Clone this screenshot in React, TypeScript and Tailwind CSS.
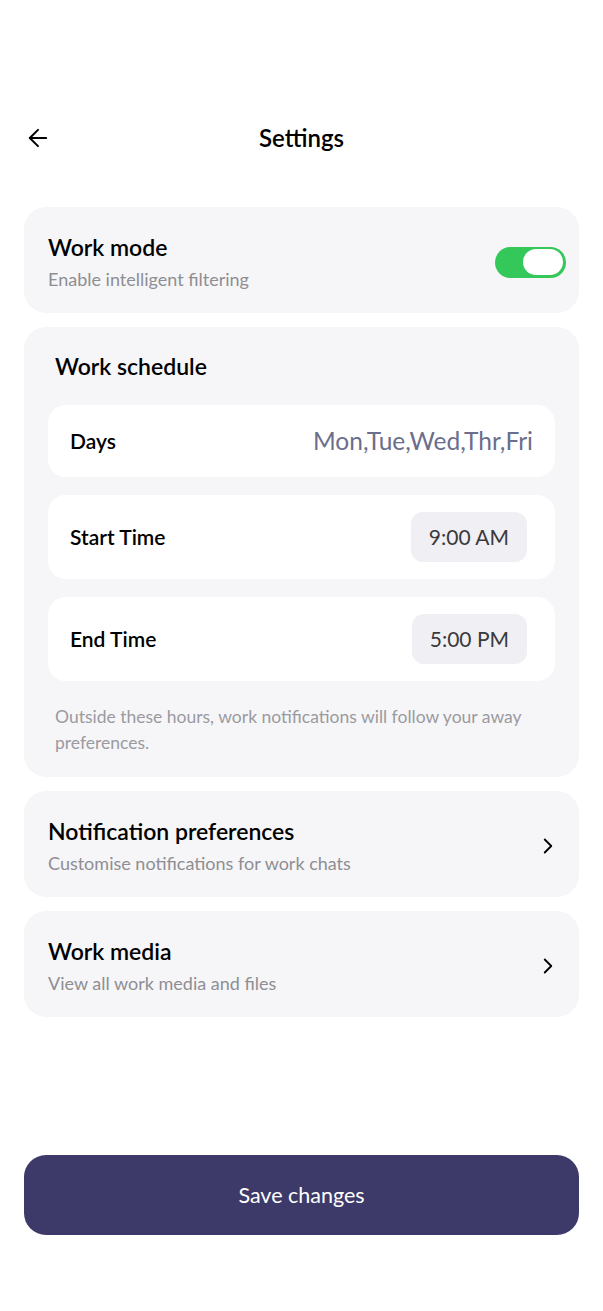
import { ArrowLeft, ChevronRight } from "lucide-react";

const font = { fontFamily: '"Lato", "Noto Sans", sans-serif' };

function Toggle() {
  return (
    <div className="flex h-[31px] w-[71px] items-center justify-end rounded-full bg-[#34c759] px-[3px]">
      <div className="h-[26px] w-[40px] rounded-full bg-white" />
    </div>
  );
}

function LinkCard({ title, subtitle }: { title: string; subtitle: string }) {
  return (
    <div className="flex items-center justify-between rounded-[22px] bg-[#f6f6f8] pl-6 pr-[18px] pt-[26px] pb-[22px]">
      <div className="flex flex-col gap-[6px]">
        <span className="text-[23px] font-semibold leading-7 text-black">{title}</span>
        <span className="text-[18px] leading-6 text-[#8e8e93]">{subtitle}</span>
      </div>
      <ChevronRight className="h-[26px] w-[26px] text-black" strokeWidth={1.7} />
    </div>
  );
}

function TimeRow({ label, value }: { label: string; value: string }) {
  return (
    <div className="flex h-[84px] items-center justify-between rounded-[18px] bg-white pl-[22px] pr-[28px]">
      <span className="text-[21px] font-semibold text-black">{label}</span>
      <span className="flex h-[50px] items-center rounded-[12px] bg-[#f0f0f4] px-[18px] text-[21px] text-[#3a3a3c]">
        {value}
      </span>
    </div>
  );
}

export default function App() {
  return (
    <div style={font} className="flex min-h-screen flex-col bg-white px-6 pb-[76px] pt-[116px]">
      {/* Header */}
      <div className="relative flex h-11 items-center justify-center">
        <ArrowLeft className="absolute left-0 h-[28px] w-[28px] text-black" strokeWidth={1.7} />
        <span className="text-[24px] font-semibold text-black">Settings</span>
      </div>

      <div className="mt-[47px] flex flex-col gap-[14px]">
        {/* Work mode */}
        <div className="flex items-center justify-between rounded-[22px] bg-[#f6f6f8] pl-6 pr-[13px] pt-[26px] pb-[22px]">
          <div className="flex flex-col gap-[6px]">
            <span className="text-[23px] font-semibold leading-7 text-black">Work mode</span>
            <span className="text-[18px] leading-6 text-[#8e8e93]">Enable intelligent filtering</span>
          </div>
          <Toggle />
        </div>

        {/* Work schedule */}
        <div className="flex flex-col rounded-[22px] bg-[#f6f6f8] px-6 pt-[25px] pb-[21px]">
          <span className="ml-[7px] text-[23px] font-semibold leading-7 text-black">Work schedule</span>
          <div className="mt-[25px] flex flex-col gap-[18px]">
            <div className="flex h-[72px] items-center justify-between rounded-[18px] bg-white px-[22px]">
              <span className="text-[21px] font-semibold text-black">Days</span>
              <span className="text-[24.5px] text-[#6b6e8c]">Mon,Tue,Wed,Thr,Fri</span>
            </div>
            <TimeRow label="Start Time" value="9:00 AM" />
            <TimeRow label="End Time" value="5:00 PM" />
          </div>
          <p className="ml-[7px] mt-[23px] text-[17.5px] leading-[26px] text-[#9a9aa0]">
            Outside these hours, work notifications will follow your away preferences.
          </p>
        </div>

        <LinkCard title="Notification preferences" subtitle="Customise notifications for work chats" />
        <LinkCard title="Work media" subtitle="View all work media and files" />
      </div>

      <button className="mt-auto flex h-20 w-full items-center justify-center rounded-[22px] bg-[#3d3a6a] text-[21.5px] text-white">
        Save changes
      </button>
    </div>
  );
}
